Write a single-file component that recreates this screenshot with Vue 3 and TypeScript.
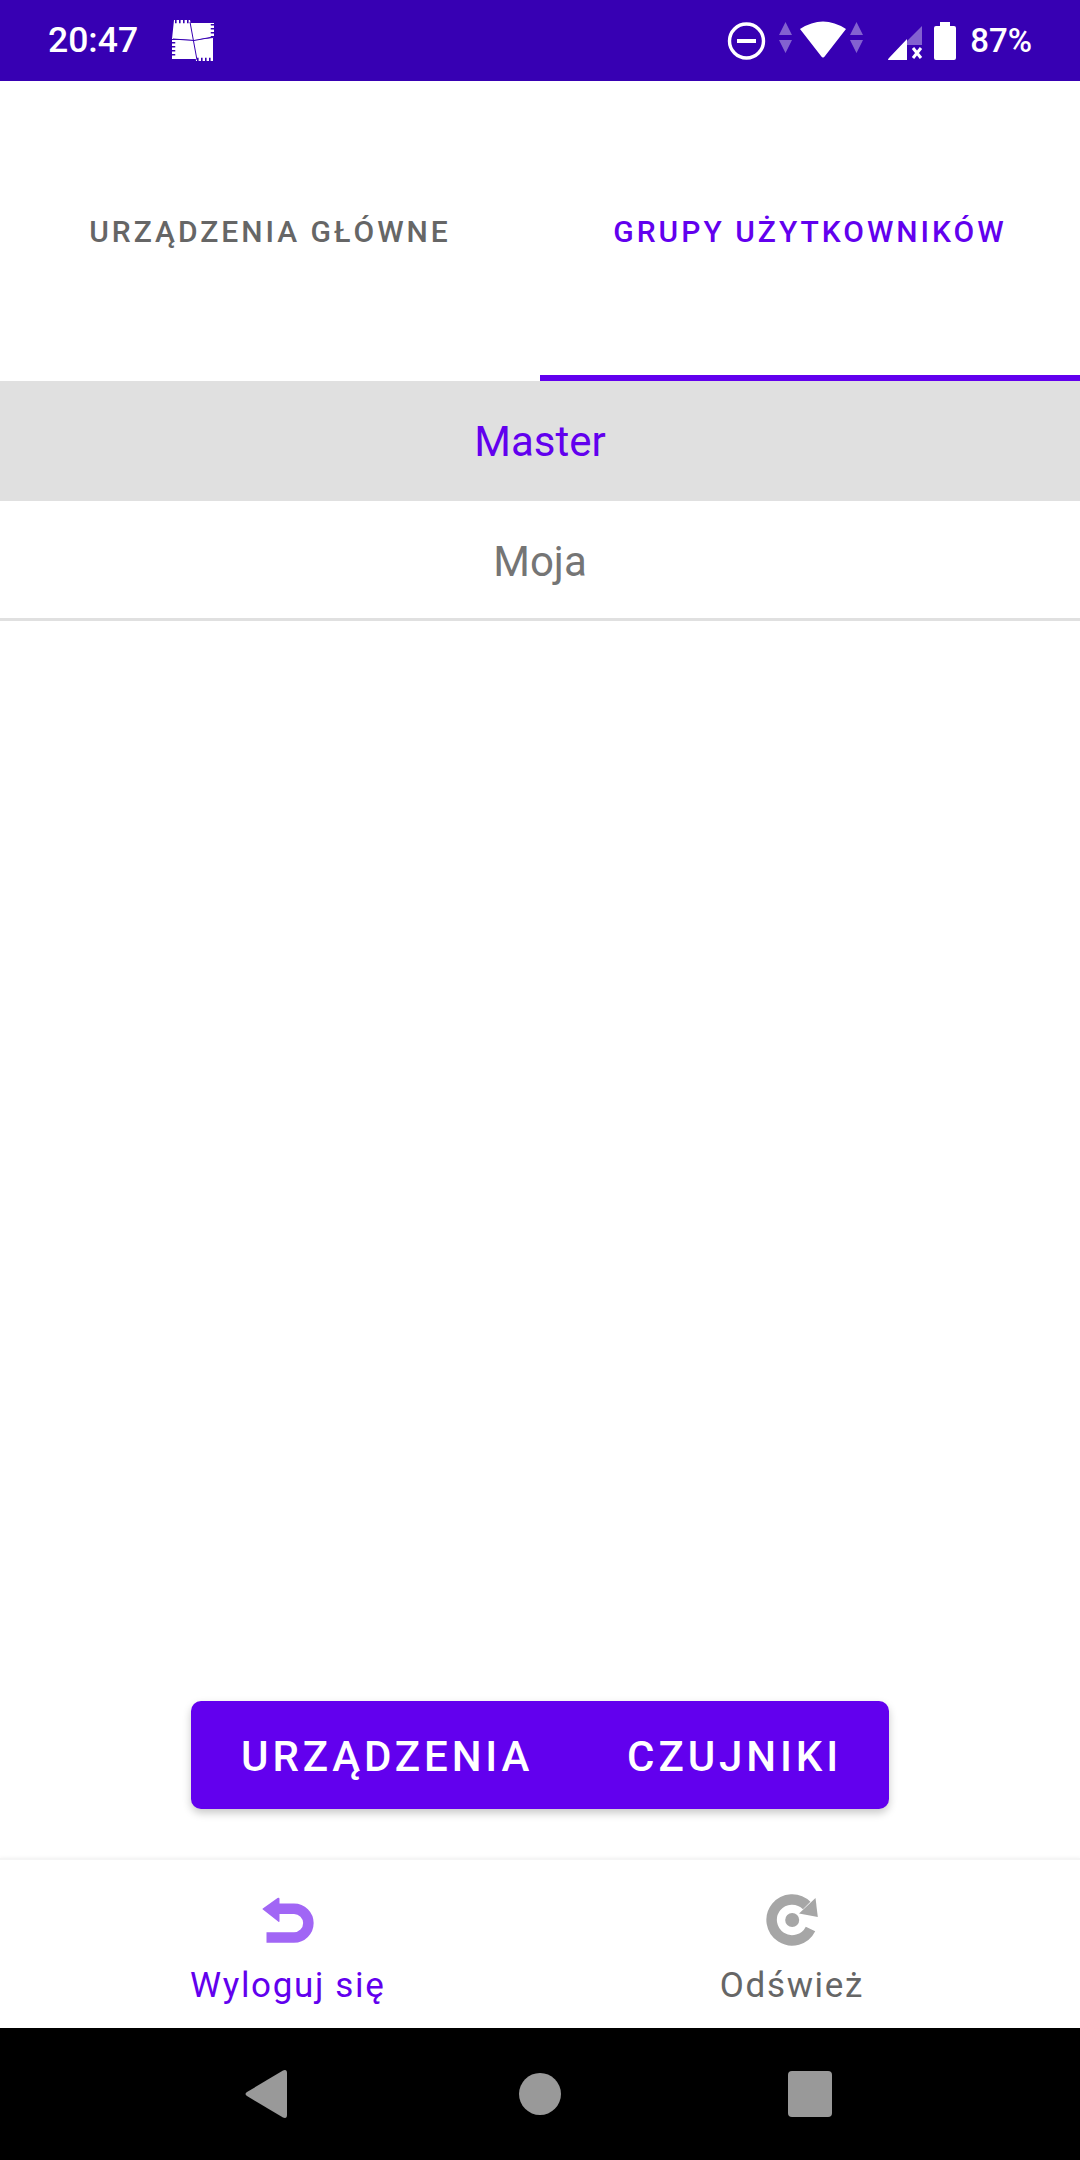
<script setup lang="ts">
const tabs: { label: string; active: boolean }[] = [
  { label: 'URZĄDZENIA GŁÓWNE', active: false },
  { label: 'GRUPY UŻYTKOWNIKÓW', active: true },
]
const groups: { label: string; selected: boolean }[] = [
  { label: 'Master', selected: true },
  { label: 'Moja', selected: false },
]
</script>

<template>
  <div class="screen">
    <header class="status">
      <span class="time">20:47</span>
      <svg class="avg" width="44" height="44" viewBox="170 19 44 44">
        <path d="M173 20H189L193 40L171 39ZM189 23H213V37L193 40ZM171 40H193L196 59H171ZM193 40L212 38V61H195Z" fill="#fff" />
        <path d="M174 21.500H190M211.500 24V37M172.500 42V58M196 59.500H212" stroke="#3700b3" stroke-width="3.500" stroke-dasharray="1.600 2.400" fill="none" />
        <path d="M189 22L196 60M172 39L193 40.500L212 37" stroke="#3700b3" stroke-width="1" fill="none" />
      </svg>
      <span class="spacer"></span>
      <svg class="icons" width="230" height="50" viewBox="727 15 230 50">
        <circle cx="746.500" cy="40" r="17" fill="none" stroke="#fff" stroke-width="3.400" />
        <rect x="737" y="38" width="19" height="4" fill="#fff" />
        <path d="M785.500 21L792 34H779ZM785.500 52L792 39H779Z" fill="#fff" fill-opacity=".38" />
        <path d="M800 28Q823 13 846 28L825 55Q823 58 821 55Z" fill="#fff" />
        <path d="M856.500 21L863 34H850ZM856.500 52L863 39H850Z" fill="#fff" fill-opacity=".38" />
        <path d="M922 25V44H907V40Z" fill="#fff" fill-opacity=".38" />
        <path d="M907 38V59H889Q887 59 889 57Z" fill="#fff" />
        <path d="M913 47L921 57M921 47L913 57" stroke="#fff" stroke-width="3" fill="none" />
        <path d="M940 21H950V25H954Q956 25 956 27V57Q956 59 954 59H936Q934 59 934 57V27Q934 25 936 25H940Z" fill="#fff" />
      </svg>
      <span class="battery">87%</span>
    </header>

    <nav class="tabs">
      <div v-for="tab in tabs" :key="tab.label" class="tab" :class="{ active: tab.active }">
        {{ tab.label }}
      </div>
    </nav>

    <ul class="groups">
      <li v-for="g in groups" :key="g.label" class="group" :class="{ selected: g.selected }">
        {{ g.label }}
      </li>
    </ul>

    <main class="content">
      <div class="actions">
        <span class="action">URZĄDZENIA</span>
        <span class="action">CZUJNIKI</span>
      </div>
    </main>

    <footer class="bottom">
      <div class="item current">
        <svg width="60" height="54" viewBox="257.500 1893 60 54">
          <path d="M266 1937.500H293.500A14.400 14.400 0 0 0 293.500 1908.700H272" fill="none" stroke="#a166f5" stroke-width="10.500" />
          <path d="M263 1908L277 1898Q279 1897 279 1899V1921Q279 1923 277 1921L263 1910Q261 1909 263 1908Z" fill="#a166f5" />
        </svg>
        <span class="label">Wyloguj się</span>
      </div>
      <div class="item">
        <svg width="60" height="54" viewBox="761.500 1893 60 54">
          <path d="M810 1929A20.500 20.500 0 1 1 806.200 1905.500" fill="none" stroke="#a6a6a6" stroke-width="10.500" />
          <path d="M815 1898L817.300 1917L798.500 1913.500Z" fill="#a6a6a6" />
          <circle cx="791.700" cy="1920" r="7" fill="#a6a6a6" />
        </svg>
        <span class="label">Odśwież</span>
      </div>
    </footer>

    <div class="system">
      <svg width="1080" height="132" viewBox="0 2028 1080 132">
        <path d="M247 2092L283 2070.500Q287 2069 287 2073V2115Q287 2119 283 2117.500L247 2096Q244 2094 247 2092Z" fill="#999" />
        <circle cx="540" cy="2094" r="21" fill="#999" />
        <rect x="788" y="2071" width="44" height="46" rx="4" fill="#999" />
      </svg>
    </div>
  </div>
</template>

<style scoped>
.screen {
  width: 1080px;
  height: 2160px;
  display: flex;
  flex-direction: column;
  background: #fff;
  font-family: Roboto, "Liberation Sans", sans-serif;
  overflow: hidden;
}
.status {
  height: 81px;
  flex: none;
  background: #3700b3;
  color: #fff;
  display: flex;
  align-items: center;
  padding: 0 48px 0 48px;
  box-sizing: border-box;
  font-weight: 500;
}
.time {
  font-size: 35.500px;
  line-height: 81px;
}
.avg {
  margin-left: 33px;
  flex: none;
}
.spacer {
  flex: 1;
}
.icons {
  flex: none;
  margin-right: 13px;
}
.battery {
  font-size: 33px;
  line-height: 81px;
}
.tabs {
  height: 300px;
  flex: none;
  display: flex;
}
.tab {
  flex: 1;
  display: flex;
  align-items: center;
  justify-content: center;
  font-size: 30px;
  font-weight: 480;
  letter-spacing: 3px;
  color: #666;
  box-sizing: border-box;
  padding-top: 6px;
  border-bottom: 6px solid transparent;
}
.tab.active {
  color: #6200ee;
  border-bottom-color: #6200ee;
}
.groups {
  list-style: none;
  margin: 0;
  padding: 0;
  flex: none;
}
.group {
  height: 120px;
  display: flex;
  align-items: center;
  justify-content: center;
  font-size: 42px;
  color: #757575;
}
.group.selected {
  background: #e0e0e0;
  color: #6200ee;
}
.group:last-child {
  border-bottom: 3px solid #e0e0e0;
  box-sizing: border-box;
  padding-top: 3px;
}
.content {
  flex: 1;
  display: flex;
  align-items: flex-end;
  justify-content: center;
  padding-bottom: 49px;
}
.actions {
  width: 698px;
  height: 108px;
  box-sizing: border-box;
  padding: 2px 47px 0 50px;
  display: flex;
  align-items: center;
  justify-content: space-between;
  background: #6200ee;
  border-radius: 10px;
  box-shadow: 0 4px 8px rgba(0, 0, 0, 0.22);
}
.action {
  color: #fff;
  font-size: 42px;
  font-weight: 500;
  letter-spacing: 3.900px;
}
.bottom {
  height: 170px;
  flex: none;
  box-sizing: border-box;
  display: flex;
  justify-content: space-between;
  align-items: flex-start;
  padding: 0 216px 0 190px;
  border-top: 2px solid #f5f5f5;
  box-shadow: 0 -1px 3px rgba(0, 0, 0, 0.04);
}
.item {
  display: flex;
  flex-direction: column;
  align-items: center;
  padding-top: 33px;
  color: #666;
}
.item.current {
  color: #6200ee;
}
.item svg {
  flex: none;
  display: block;
}
.label {
  font-size: 35px;
  letter-spacing: 1.650px;
  line-height: 42px;
  margin-top: 18px;
}
.system {
  height: 132px;
  flex: none;
  background: #000;
}
.system svg {
  display: block;
}
</style>
